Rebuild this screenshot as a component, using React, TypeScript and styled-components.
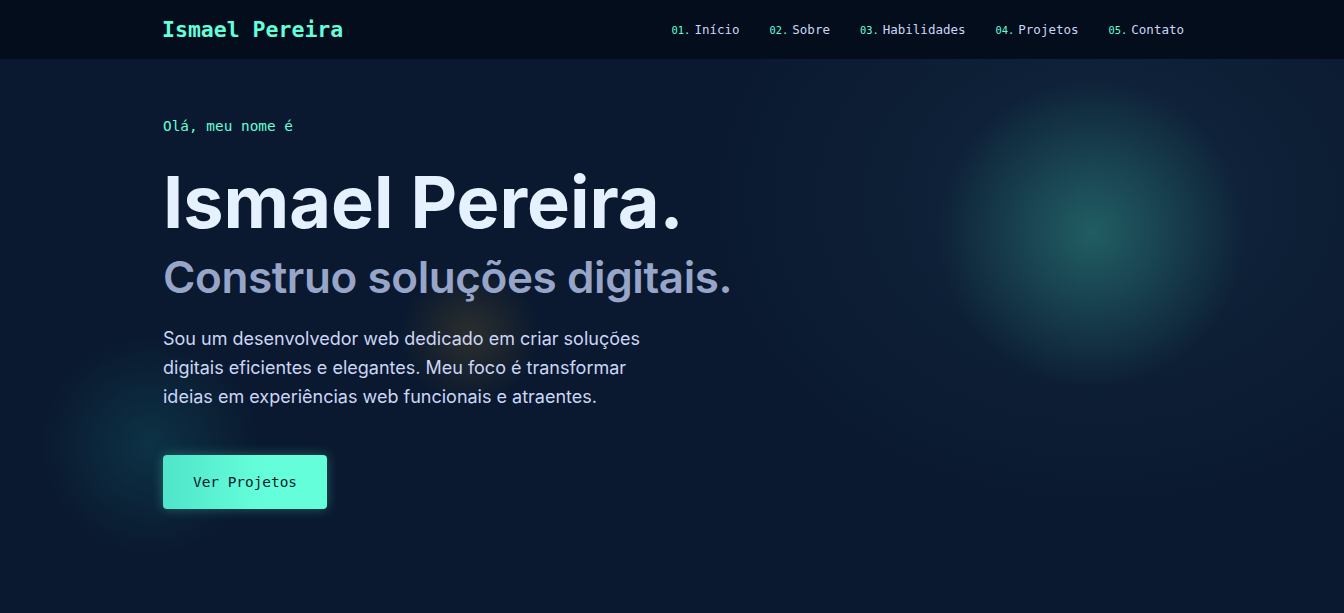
import React from "react";
import styled, { createGlobalStyle } from "styled-components";

const GlobalStyle = createGlobalStyle`
  html, body { margin: 0; padding: 0; }
  body {
    background: #0a192f;
    font-family: Inter, "Noto Sans", sans-serif;
    overflow: hidden;
  }
  * { box-sizing: border-box; }
`;

const mono = `"DejaVu Sans Mono", "Liberation Mono", monospace`;

const Page = styled.div`
  position: relative;
  width: 100%;
  height: 613px;
  overflow: hidden;
  background:
    radial-gradient(ellipse 560px 440px at 1100px 200px, rgba(24, 52, 76, 0.5), rgba(10, 25, 47, 0) 70%),
    #0a192f;
`;

const Glow = styled.div<{ $x: number; $y: number; $r: number; $c: string }>`
  position: absolute;
  left: ${(p) => p.$x - p.$r}px;
  top: ${(p) => p.$y - p.$r}px;
  width: ${(p) => p.$r * 2}px;
  height: ${(p) => p.$r * 2}px;
  border-radius: 50%;
  background: radial-gradient(circle, ${(p) => p.$c} 0%, rgba(10, 25, 47, 0) 70%);
  pointer-events: none;
`;

const Header = styled.header`
  position: relative;
  z-index: 2;
  height: 59px;
  background: #030d1c;
`;

const Container = styled.div`
  max-width: 1024px;
  margin: 0 auto;
  height: 100%;
`;

const NavBar = styled(Container)`
  display: flex;
  align-items: center;
  justify-content: space-between;
`;

const Logo = styled.div`
  font-family: ${mono};
  font-weight: 700;
  font-size: 21.5px;
  color: #64ffda;
  padding-left: 2px;
`;

const NavList = styled.nav`
  display: flex;
  gap: 30px;
  padding-right: 0;
`;

const NavItem = styled.a`
  font-family: ${mono};
  font-size: 12.5px;
  color: #ccd6f6;
  text-decoration: none;
  display: flex;
  align-items: baseline;
  gap: 4px;
`;

const NavNum = styled.span`
  color: #64ffda;
  font-size: 10.4px;
`;

const Hero = styled.section`
  position: relative;
  z-index: 1;
`;

const HeroInner = styled(Container)`
  display: flex;
  flex-direction: column;
  align-items: flex-start;
  padding-top: 59px;
  padding-left: 3px;
`;

const Greeting = styled.p`
  margin: 0;
  font-family: ${mono};
  font-size: 14.4px;
  color: #64ffda;
`;

const Name = styled.h1`
  margin: 28px 0 0;
  font-size: 72px;
  font-weight: 700;
  line-height: 1.1;
  letter-spacing: 0;
  color: #e6f1ff;
`;

const Tagline = styled.h2`
  margin: 12px 0 0;
  font-size: 44px;
  font-weight: 600;
  line-height: 1.1;
  letter-spacing: -0.4px;
  color: #97a5c9;
`;

const Intro = styled.p`
  margin: 22px 0 0;
  max-width: 500px;
  font-size: 18px;
  line-height: 29px;
  color: #ccd6f6;
`;

const Button = styled.a`
  margin-top: 44px;
  display: inline-flex;
  align-items: center;
  justify-content: center;
  width: 164px;
  height: 54px;
  border-radius: 4px;
  background: linear-gradient(90deg, #50e4ca 0%, #64ffda 60%);
  box-shadow: 0 0 12px rgba(100, 255, 218, 0.3);
  font-family: ${mono};
  font-size: 14.4px;
  color: #0a192f;
  text-decoration: none;
`;

const links = ["Início", "Sobre", "Habilidades", "Projetos", "Contato"];

export default function App() {
  return (
    <>
      <GlobalStyle />
      <Page>
        <Glow $x={1092} $y={233} $r={155} $c="rgba(38, 112, 112, 0.75)" />
        <Glow $x={470} $y={335} $r={70} $c="rgba(120, 95, 40, 0.3)" />
        <Glow $x={150} $y={445} $r={110} $c="rgba(16, 80, 96, 0.45)" />
        <Header>
          <NavBar>
            <Logo>Ismael Pereira</Logo>
            <NavList>
              {links.map((l, i) => (
                <NavItem key={l} href="#">
                  <NavNum>{`0${i + 1}.`}</NavNum>
                  {l}
                </NavItem>
              ))}
            </NavList>
          </NavBar>
        </Header>
        <Hero>
          <HeroInner>
            <Greeting>Olá, meu nome é</Greeting>
            <Name>Ismael Pereira.</Name>
            <Tagline>Construo soluções digitais.</Tagline>
            <Intro>
              Sou um desenvolvedor web dedicado em criar soluções digitais eficientes e elegantes. Meu foco é
              transformar ideias em experiências web funcionais e atraentes.
            </Intro>
            <Button href="#">Ver Projetos</Button>
          </HeroInner>
        </Hero>
      </Page>
    </>
  );
}
